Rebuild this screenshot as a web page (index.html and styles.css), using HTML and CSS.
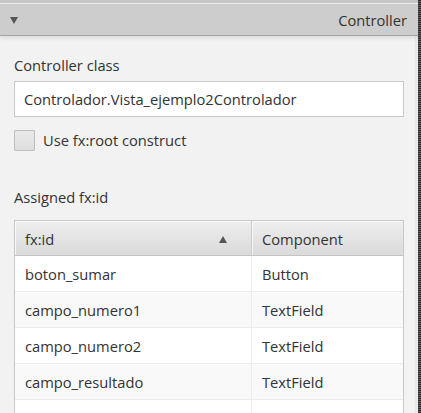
FILE: index.html
```html
<!DOCTYPE html>
<html>
<head>
<meta charset="utf-8">
<link rel="stylesheet" href="styles.css">
</head>
<body>
<div class="panel">
  <div class="titlebar">
    <span class="arrow"></span>
    <span class="title">Controller</span>
  </div>
  <div class="content">
    <div class="label first">Controller class</div>
    <div class="field">Controlador.Vista_ejemplo2Controlador</div>
    <div class="check-row">
      <span class="checkbox"></span>
      <span class="check-label">Use fx:root construct</span>
    </div>
    <div class="label second">Assigned fx:id</div>
    <div class="table">
      <div class="thead">
        <div class="th col1"><span>fx:id</span><span class="sort"></span></div>
        <div class="th col2"><span>Component</span></div>
      </div>
      <div class="row"><div class="td col1">boton_sumar</div><div class="td col2">Button</div></div>
      <div class="row alt"><div class="td col1">campo_numero1</div><div class="td col2">TextField</div></div>
      <div class="row"><div class="td col1">campo_numero2</div><div class="td col2">TextField</div></div>
      <div class="row alt"><div class="td col1">campo_resultado</div><div class="td col2">TextField</div></div>
      <div class="row"><div class="td col1"></div><div class="td col2"></div></div>
    </div>
  </div>
</div>
</body>
</html>
```

FILE: styles.css
```css
html, body {
  margin: 0;
  padding: 0;
  height: 100%;
  overflow: hidden;
}
body {
  font-family: "Open Sans", "Lato", sans-serif;
  font-size: 14.7px;
  color: #333333;
  background: repeating-linear-gradient(#2e2e2e 0, #2e2e2e 1px, #5a5a5a 1px, #5a5a5a 2px);
}
.panel {
  width: 418px;
  height: 413px;
  background: linear-gradient(to right, #f2f2f2 0, #f2f2f2 415px, #e6e6e6 415px, #ececec 418px);
  overflow: hidden;
}
.titlebar {
  height: 31px;
  padding-top: 4px;
  border-bottom: 1px solid #a4a4a4;
  background: linear-gradient(#c6c6c6 0, #c6c6c6 3px, #ececec 3px, #ececec 4px, #cdcdcd 4px);
  display: flex;
  align-items: center;
  justify-content: space-between;
  padding-left: 10px;
  padding-right: 11px;
  box-shadow: 0 2px 4px rgba(0,0,0,0.10);
}
.arrow {
  width: 0;
  height: 0;
  border-left: 4px solid transparent;
  border-right: 4px solid transparent;
  border-top: 7px solid #555555;
  margin-top: 1px;
}
.title {
  color: #333333;
}
.content {
  padding: 0 14px;
}
.label {
  line-height: 18px;
}
.label.first {
  margin-top: 20px;
}
.field {
  margin-top: 7px;
  height: 34px;
  border: 1px solid #c9c9c9;
  background: #ffffff;
  display: flex;
  align-items: center;
  padding-left: 9px;
}
.check-row {
  margin-top: 12px;
  display: flex;
  align-items: center;
  height: 22px;
}
.checkbox {
  width: 19px;
  height: 19px;
  border: 1px solid #bdbdbd;
  background: linear-gradient(#e9e9e9, #dedede);
  border-radius: 1px;
}
.check-label {
  margin-left: 8px;
}
.label.second {
  margin-top: 37px;
}
.table {
  margin-top: 14px;
  border: 1px solid #c8c8c8;
  border-bottom: none;
  background: #ffffff;
  height: 200px;
}
.thead {
  display: flex;
  height: 34px;
  border-bottom: 1px solid #c4c4c4;
  background: linear-gradient(#eeeeee, #dadada);
}
.th {
  display: flex;
  align-items: center;
  justify-content: space-between;
  box-shadow: inset 1px 1px 0 rgba(255,255,255,0.7);
  border-right: 1px solid #cacaca;
  box-sizing: border-box;
  padding-top: 2px;
}
.th.col1 {
  padding-right: 24px;
}
.th.col2 {
  border-right: none;
}
.col1 {
  width: 237px;
  padding-left: 10px;
  padding-right: 17px;
  box-sizing: border-box;
}
.col2 {
  width: 151px;
  padding-left: 10px;
  box-sizing: border-box;
}
.sort {
  width: 0;
  height: 0;
  border-left: 4px solid transparent;
  border-right: 4px solid transparent;
  border-bottom: 7px solid #555555;
}
.row {
  display: flex;
  height: 35px;
  border-bottom: 1px solid #ececec;
  background: #ffffff;
}
.row.alt {
  background: #f9f9f9;
}
.td {
  display: flex;
  align-items: center;
}
.td.col1 {
  border-right: 1px solid #ececec;
}
```
